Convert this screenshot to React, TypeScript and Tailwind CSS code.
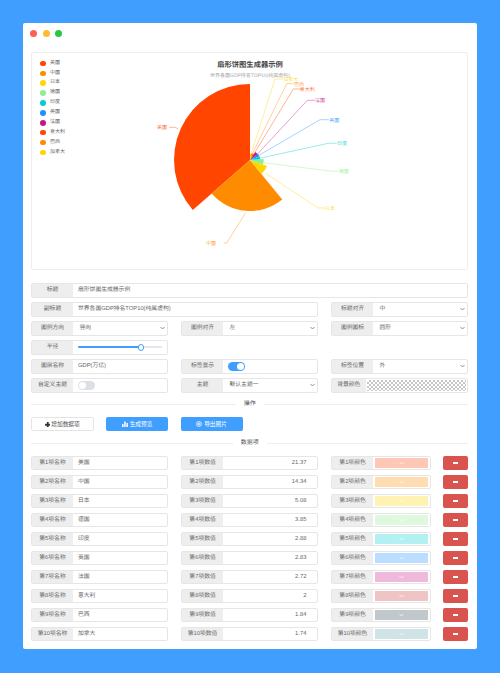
import type { ReactNode } from "react";

const FONT = "font-['Liberation_Sans','Noto_Sans_CJK_SC',sans-serif] [text-rendering:geometricPrecision]";

const legend = [
  ["美国", "#ff4500"],
  ["中国", "#ff8c00"],
  ["日本", "#ffd700"],
  ["德国", "#90ee90"],
  ["印度", "#00ced1"],
  ["英国", "#1e90ff"],
  ["法国", "#c71585"],
  ["意大利", "#ff4500"],
  ["巴西", "#ff8c00"],
  ["加拿大", "#ffd700"],
];

const rows = [
  ["美国", "21.37", "#ffc7b5"],
  ["中国", "14.34", "#ffddb3"],
  ["日本", "5.08", "#fff3b3"],
  ["德国", "3.85", "#def9de"],
  ["印度", "2.88", "#b3f0f1"],
  ["英国", "2.83", "#bbddff"],
  ["法国", "2.72", "#eeb9da"],
  ["意大利", "2", "#eec4c4"],
  ["巴西", "1.84", "#c1c8cc"],
  ["加拿大", "1.74", "#d0e3e6"],
];

const cx = 250;
const cy = 160;

function slice(a0: number, a1: number, r: number) {
  const p = (a: number) => {
    const t = ((a - 90) * Math.PI) / 180;
    return `${(cx + r * Math.cos(t)).toFixed(2)} ${(cy + r * Math.sin(t)).toFixed(2)}`;
  };
  const large = a1 - a0 > 180 ? 1 : 0;
  return `M${cx} ${cy}L${p(a0)}A${r} ${r} 0 ${large} 1 ${p(a1)}Z`;
}

// 角度和半径都按数值比例算
const total = rows.reduce((s, r) => s + parseFloat(r[1]), 0);
let fin = 360;
const pies = rows.map((r, i) => {
  const v = parseFloat(r[1]);
  const ini = fin - (v / total) * 360;
  const d = slice(ini, fin, (v / 21.37) * 76);
  fin = ini;
  return { d, c: legend[i][1] };
});

const labels: [string, string, string, number, number][] = [
  ["美国", "#ff4500", "M178.3 129L175.3 127.3L169.3 127.3", 162, 127.3],
  ["中国", "#ff8c00", "M245.7 212.7L226.7 243L224 243", 211, 243],
  ["日本", "#ffd700", "M265 173L318 208L325.7 208", 330, 208],
  ["德国", "#90ee90", "M263.3 162.7L330 171L338.3 171.3", 343.7, 171.3],
  ["印度", "#00ced1", "M259.3 158.3L328.3 143.3L336.7 143.3", 342, 143.3],
  ["英国", "#1e90ff", "M256 157L320 119.7L329 119.7", 334.3, 119.7],
  ["法国", "#c71585", "M255 156.7L307.3 100.3L315 100.3", 320, 100.3],
  ["意大利", "#ff4500", "M253.3 155L293.3 89L301.7 89", 307.3, 89],
  ["巴西", "#ff8c00", "M251.7 155L286.7 83.7L293.3 83.7", 299, 83.7],
  ["加拿大", "#ffd700", "M250.7 155L275 79L283.3 79", 290.7, 79],
];

const Campo = ({
  label,
  children,
  ancho = "w-[137.3px]",
  sinPad = false,
}: {
  label: string;
  children?: ReactNode;
  ancho?: string;
  sinPad?: boolean;
}) => (
  <div className={`flex h-[14.5px] border border-[#e6e6e6] rounded-[2px] bg-white overflow-hidden ${ancho}`}>
    <div className="w-[41px] shrink-0 flex items-center justify-center bg-[#eeeeee] text-[5.8px] text-[#666]">
      {label}
    </div>
    <div className={`flex-1 min-w-0 flex items-center text-[5.8px] text-[#666] ${sinPad ? "" : "px-[5px]"}`}>
      {children}
    </div>
  </div>
);

const Chevron = () => (
  <svg width="5" height="4" viewBox="0 0 10 8" className="ml-auto -mr-[3px] shrink-0" fill="none">
    <path d="M1 2l4 4 4-4" stroke="#777" strokeWidth="1.6" />
  </svg>
);

const Sel = ({ v }: { v: string }) => (
  <>
    <span className="ml-[1.5px]">{v}</span>
    <Chevron />
  </>
);

const Divisor = ({ texto }: { texto: string }) => (
  <div className="flex items-center h-[8px] gap-[8px] text-[6px] text-[#555]">
    <div className="flex-1 h-px bg-[#eeeeee]" />
    <span>{texto}</span>
    <div className="flex-1 h-px bg-[#eeeeee]" />
  </div>
);

export default function App() {
  return (
    <div className={`${FONT} min-h-[673px] bg-[#409eff] pt-[23px] px-[23px]`}>
      <div className="h-[626px] bg-white rounded-[2px] pl-[8px] pr-[8.7px] pt-[7px]">
        <div className="flex gap-[5.5px] h-[22px] -ml-px">
          <span className="w-[7px] h-[7px] rounded-full bg-[#ff5f56]" />
          <span className="w-[7px] h-[7px] rounded-full bg-[#ffbd2e]" />
          <span className="w-[7px] h-[7px] rounded-full bg-[#27c93f]" />
        </div>

        <div className="relative h-[217.5px] border border-[#eeeeee] rounded-[2px]">
          <ul className="absolute left-[8px] top-[5.5px] flex flex-col text-[5px] text-[#666]">
            {legend.map(([n, c]) => (
              <li key={n + c} className="flex items-center h-[9.9px] gap-[4.5px]">
                <span className="w-[5.5px] h-[5.5px] rounded-full" style={{ backgroundColor: c }} />
                {n}
              </li>
            ))}
          </ul>
          <svg viewBox="0 0 437 217" className="absolute left-[-1px] top-[-1px] w-[437px] h-[217px]">
            <g transform="translate(-31 -52)">
              <text x="250" y="66.5" textAnchor="middle" fontSize="7.3" fontWeight="700" fill="#444">
                扇形饼图生成器示例
              </text>
              <text x="250" y="77" textAnchor="middle" fontSize="5" fill="#aaa">
                世界各国GDP排名TOP10(纯属虚构)
              </text>
              {pies.map((p, i) => (
                <path key={i} d={p.d} fill={p.c} />
              ))}
              {labels.map(([t, c, d, x, y]) => (
                <g key={t}>
                  <path d={d} fill="none" stroke={c} strokeOpacity="0.5" strokeWidth="0.8" />
                  <text x={x} y={y + 1.8} textAnchor="middle" fontSize="5" fill={c} fillOpacity="0.8">
                    {t}
                  </text>
                </g>
              ))}
            </g>
          </svg>
        </div>

        <div className="mt-[13.5px] flex flex-col gap-[4.5px]">
          <Campo label="标题" ancho="w-full">
            扇形饼图生成器示例
          </Campo>
          <div className="flex justify-between">
            <Campo label="副标题" ancho="w-[287.3px]">
              世界各国GDP排名TOP10(纯属虚构)
            </Campo>
            <Campo label="标题对齐">
              <Sel v="中" />
            </Campo>
          </div>
          <div className="flex justify-between">
            <Campo label="图例方向">
              <Sel v="竖向" />
            </Campo>
            <Campo label="图例对齐">
              <Sel v="左" />
            </Campo>
            <Campo label="图例图标">
              <Sel v="圆形" />
            </Campo>
          </div>
          <Campo label="半径">
            <div className="relative w-full h-[2px] rounded-full bg-[#e4e7ed]">
              <div className="absolute left-0 top-0 h-[2px] w-[75%] rounded-full bg-[#409eff]" />
              <div className="absolute left-[75%] top-[-2.25px] -ml-[3.25px] w-[6.5px] h-[6.5px] rounded-full bg-white border border-[#409eff]" />
            </div>
          </Campo>
          <div className="flex justify-between">
            <Campo label="图层名称">GDP(万亿)</Campo>
            <Campo label="标签显示">
              <div className="relative w-[16.5px] h-[8.5px] rounded-full bg-[#409eff]">
                <div className="absolute right-[1px] top-[1px] w-[6.5px] h-[6.5px] rounded-full bg-white" />
              </div>
            </Campo>
            <Campo label="标签位置">
              <Sel v="外" />
            </Campo>
          </div>
          <div className="flex justify-between">
            <Campo label="自定义主题">
              <div className="relative w-[16.5px] h-[8.5px] rounded-full bg-[#dcdfe6]">
                <div className="absolute left-[1px] top-[1px] w-[6.5px] h-[6.5px] rounded-full bg-white" />
              </div>
            </Campo>
            <Campo label="主题">
              <Sel v="默认主题一" />
            </Campo>
            <div className="flex h-[14.5px] w-[137.3px] border border-[#e6e6e6] rounded-[2px] overflow-hidden">
              <div className="w-[33.5px] shrink-0 flex items-center justify-center bg-[#eeeeee] text-[5.8px] text-[#666]">
                背景颜色
              </div>
              <div className="flex-1 m-[1px] bg-[repeating-conic-gradient(#c8c8c8_0%_25%,#ffffff_0%_50%)] bg-[length:4px_4px]" />
            </div>
          </div>
        </div>

        <div className="mt-[7.5px]">
          <Divisor texto="操作" />
        </div>

        <div className="mt-[9.3px] flex gap-[12.5px]">
          <button className="w-[62.5px] h-[14px] flex items-center justify-center gap-[1px] border border-[#e4e4e4] rounded-[2px] text-[5.7px] text-[#555]">
            <svg width="5.5" height="5.5" viewBox="0 0 6 6" fill="#333">
              <rect x="2" y="0" width="2" height="6" />
              <rect x="0" y="2" width="6" height="2" />
            </svg>
            增加数据项
          </button>
          <button className="w-[62px] h-[14px] flex items-center justify-center gap-[2px] bg-[#409eff] rounded-[2px] text-[5.7px] text-white">
            <svg width="6" height="6" viewBox="0 0 6 6" fill="#fff">
              <rect x="0" y="3" width="1.5" height="3" />
              <rect x="2.2" y="0.5" width="1.5" height="5.5" />
              <rect x="4.4" y="2" width="1.5" height="4" />
            </svg>
            生成预览
          </button>
          <button className="w-[62px] h-[14px] flex items-center justify-center gap-[2px] bg-[#409eff] rounded-[2px] text-[5.7px] text-white">
            <svg width="6" height="6" viewBox="0 0 6 6" fill="none" stroke="#fff">
              <circle cx="3" cy="3" r="2.4" strokeWidth="0.8" />
              <circle cx="3" cy="3" r="0.9" strokeWidth="0.8" />
            </svg>
            导出图片
          </button>
        </div>

        <div className="mt-[8px]">
          <Divisor texto="数据项" />
        </div>

        <div className="mt-[8.7px] flex flex-col gap-[4.5px]">
          {rows.map(([n, v, c], i) => (
            <div key={n + i} className="flex items-center">
              <Campo label={`第${i + 1}项名称`}>{n}</Campo>
              <div className="ml-[13px]">
                <Campo label={`第${i + 1}项数值`}>
                  <span className="ml-auto mr-[6px]">{v}</span>
                </Campo>
              </div>
              <div className="ml-[12.7px]">
                <Campo label={`第${i + 1}项颜色`} ancho="w-[99.7px]" sinPad>
                  <div
                    className="flex-1 h-[10px] mx-[1.5px] flex items-center justify-center"
                    style={{ backgroundColor: c }}
                  >
                    <svg width="5" height="4" viewBox="0 0 10 8" fill="none">
                      <path d="M1 2l4 4 4-4" stroke="#fff" strokeWidth="1.4" />
                    </svg>
                  </div>
                </Campo>
              </div>
              <button className="ml-[12.6px] w-[25px] h-[14.5px] flex items-center justify-center bg-[#d9534f] rounded-[2px]">
                <span className="w-[5px] h-[2px] bg-white" />
              </button>
            </div>
          ))}
        </div>
      </div>
    </div>
  );
}
